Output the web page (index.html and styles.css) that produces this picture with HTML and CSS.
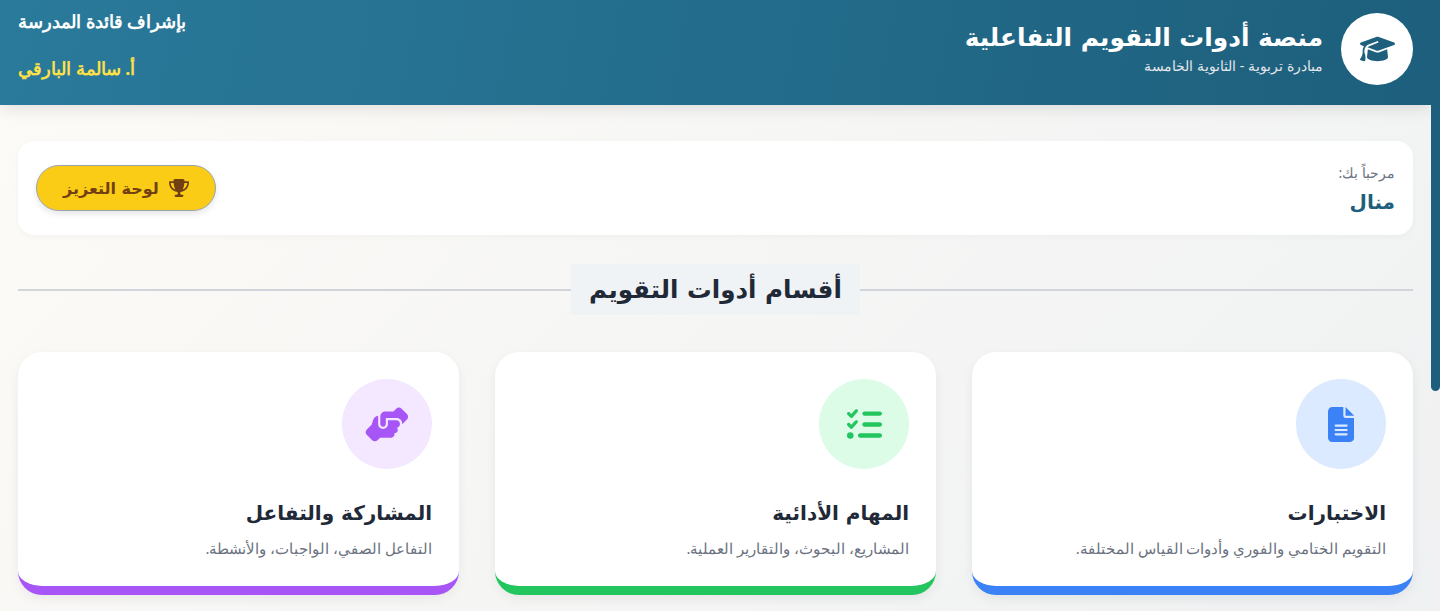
FILE: index.html
```html
<!DOCTYPE html>
<html lang="ar">
<head>
    <meta charset="UTF-8">
    <meta name="viewport" content="width=device-width, initial-scale=1.0">
    <title>منصة أدوات التقويم التفاعلية</title>
    <link rel="stylesheet" href="styles.css">
</head>
<body>
    <div class="page" dir="rtl">
        <header class="top-bar">
            <div class="brand">
                <div class="brand-logo">
                    <svg class="cap-icon" viewBox="0 0 640 512"><path d="M320 32c-8.1 0-16.1 1.4-23.7 4.1L15.8 137.4C6.3 140.9 0 149.9 0 160s6.3 19.1 15.8 22.6l57.9 20.9C57.3 229.3 48 259.8 48 291.9v28.1c0 28.4-10.8 57.7-22.3 80.8c-6.5 13-13.9 25.8-22.5 37.6C0 442.7-.9 448.3 .9 453.4s6 8.9 11.2 10.2l64 16c4.2 1.1 8.7 .3 12.4-2s6.3-6.1 7.1-10.4c8.6-42.8 4.3-81.2-2.1-108.7C90.3 344.3 86 329.8 80 316.5V291.9c0-30.2 10.2-58.7 27.9-81.5c12.9-15.5 29.6-28 49.2-35.7l157-61.7c8.2-3.2 17.5 .8 20.7 9s-.8 17.5-9 20.7l-157 61.7c-12.4 4.9-23.3 12.4-32.2 21.6l159.6 57.6c7.6 2.7 15.6 4.1 23.7 4.1s16.1-1.4 23.7-4.1L624.2 182.6c9.5-3.4 15.8-12.5 15.8-22.6s-6.3-19.1-15.8-22.6L343.7 36.1C336.1 33.4 328.1 32 320 32zM128 408c0 35.3 86 72 192 72s192-36.7 192-72L496.7 262.6 354.5 314c-11.1 4-22.8 6-34.5 6s-23.5-2-34.5-6L143.3 262.6 128 408z"/></svg>
                </div>
                <div>
                    <h1>منصة أدوات التقويم التفاعلية</h1>
                    <p>مبادرة تربوية - الثانوية الخامسة</p>
                </div>
            </div>
            <div class="supervisor">
                <p>بإشراف قائدة المدرسة</p>
                <p class="supervisor-name">أ. سالمة البارقي</p>
            </div>
        </header>

        <main class="content">
            <section class="welcome">
                <div class="welcome-text">
                    <p class="welcome-label">مرحباً بك:</p>
                    <p class="welcome-name">منال</p>
                </div>
                <a href="#" class="board-btn">
                    <svg class="trophy-icon" viewBox="0 0 576 512"><path d="M400 0H176c-26.5 0-48.1 21.8-47.1 48.2c.2 5.3 .4 10.6 .7 15.8H24C10.7 64 0 74.7 0 88c0 92.6 33.5 157 78.5 200.7c44.3 43.1 98.3 64.8 138.1 75.8c23.4 6.5 39.4 26 39.4 45.6c0 20.9-17 37.9-37.9 37.9H192c-17.7 0-32 14.3-32 32s14.3 32 32 32H384c17.7 0 32-14.3 32-32s-14.3-32-32-32H357.9C337 448 320 431 320 410.1c0-19.6 15.9-39.2 39.4-45.6c39.9-11 93.9-32.7 138.2-75.8C542.5 245 576 180.6 576 88c0-13.3-10.7-24-24-24H446.4c.3-5.2 .5-10.4 .7-15.8C448.1 21.8 426.5 0 400 0zM48.9 112h84.4c9.1 90.1 29.2 150.3 51.9 190.6c-24.9-11-50.8-26.5-73.2-48.3c-32-31.1-58-76-63-142.3zM464.1 254.3c-22.4 21.8-48.3 37.3-73.2 48.3c22.7-40.3 42.8-100.5 51.9-190.6h84.4c-5.1 66.3-31.1 111.2-63 142.3z"/></svg>
                    لوحة التعزيز
                </a>
            </section>

            <div class="section-title">
                <h2>أقسام أدوات التقويم</h2>
            </div>

            <section class="cards">
                <a href="#" class="card card-blue">
                    <div class="card-icon">
                        <svg class="file-icon" viewBox="0 0 384 512"><path d="M64 0C28.7 0 0 28.7 0 64V448c0 35.3 28.7 64 64 64H320c35.3 0 64-28.7 64-64V160H256c-17.7 0-32-14.3-32-32V0H64zM256 0V128H384L256 0zM112 256H272c8.8 0 16 7.2 16 16s-7.2 16-16 16H112c-8.8 0-16-7.2-16-16s7.2-16 16-16zm0 64H272c8.8 0 16 7.2 16 16s-7.2 16-16 16H112c-8.8 0-16-7.2-16-16s7.2-16 16-16zm0 64H272c8.8 0 16 7.2 16 16s-7.2 16-16 16H112c-8.8 0-16-7.2-16-16s7.2-16 16-16z"/></svg>
                    </div>
                    <h3>الاختبارات</h3>
                    <p>التقويم الختامي والفوري وأدوات القياس المختلفة.</p>
                </a>
                <a href="#" class="card card-green">
                    <div class="card-icon">
                        <svg class="list-icon" viewBox="0 0 512 512"><path d="M152.1 38.2c9.9 8.9 10.7 24 1.8 33.9l-72 80c-4.4 4.9-10.6 7.8-17.2 7.9s-12.9-2.4-17.6-7L7 113C-2.3 103.6-2.3 88.4 7 79s24.6-9.4 33.9 0l22.1 22.1 55.1-61.2c8.9-9.9 24-10.7 33.9-1.8zm0 160c9.9 8.9 10.7 24 1.8 33.9l-72 80c-4.4 4.9-10.6 7.8-17.2 7.9s-12.9-2.4-17.6-7L7 273c-9.4-9.4-9.4-24.6 0-33.9s24.6-9.4 33.9 0l22.1 22.1 55.1-61.2c8.9-9.9 24-10.7 33.9-1.8zM224 96c0-17.7 14.3-32 32-32H480c17.7 0 32 14.3 32 32s-14.3 32-32 32H256c-17.7 0-32-14.3-32-32zm0 160c0-17.7 14.3-32 32-32H480c17.7 0 32 14.3 32 32s-14.3 32-32 32H256c-17.7 0-32-14.3-32-32zM160 416c0-17.7 14.3-32 32-32H480c17.7 0 32 14.3 32 32s-14.3 32-32 32H192c-17.7 0-32-14.3-32-32zM48 368a48 48 0 1 1 0 96 48 48 0 1 1 0-96z"/></svg>
                    </div>
                    <h3>المهام الأدائية</h3>
                    <p>المشاريع، البحوث، والتقارير العملية.</p>
                </a>
                <a href="#" class="card card-purple">
                    <div class="card-icon">
                        <svg class="hands-icon" viewBox="0 0 640 512"><path d="M544 248v3.3l69.7-69.7c21.9-21.9 21.9-57.3 0-79.2L535.6 24.4c-21.9-21.9-57.3-21.9-79.2 0L416.3 64.5c-2.7-.3-5.5-.5-8.3-.5H296c-37.1 0-67.6 28-71.6 64H224V248c0 22.1 17.9 40 40 40s40-17.9 40-40V176c0 0 0-.1 0-.1V160l16 0 136 0c0 0 0 0 .1 0H464c44.2 0 80 35.8 80 80v8zM336 192v56c0 39.8-32.2 72-72 72s-72-32.2-72-72V129.4c-35.9 6.2-65.8 32.3-76 68.2L99.5 255.2 26.3 328.4c-21.9 21.9-21.9 57.3 0 79.2l78.1 78.1c21.9 21.9 57.3 21.9 79.2 0l37.7-37.7c.9 0 1.8 .1 2.7 .1H384c26.5 0 48-21.5 48-48c0-5.6-1-11-2.7-16H432c26.5 0 48-21.5 48-48c0-12.8-5-24.4-13.2-33c25.7-5.2 45.2-27.9 45.2-55c0-30.9-25.1-56-56-56H336z"/></svg>
                    </div>
                    <h3>المشاركة والتفاعل</h3>
                    <p>التفاعل الصفي، الواجبات، والأنشطة.</p>
                </a>
            </section>
        </main>
    </div>
    <div class="scroll-track"><div class="scroll-thumb"></div></div>
</body>
</html>
```

FILE: styles.css
```css
* {
    box-sizing: border-box;
}

body {
    font-family: "Noto Sans", "Open Sans", sans-serif;
    margin: 0;
    height: 100vh;
    overflow: hidden;
    display: flex;
    background: #f1f1f1;
    color: #1f2937;
}

h1, h2, h3, p {
    margin: 0;
}

.page {
    flex: 1;
    min-width: 0;
    background: linear-gradient(135deg, #fdfbf7, #eceff1) top / 100% 957px no-repeat;
}

.scroll-track {
    width: 9px;
    background: #f1f1f1;
}

.scroll-thumb {
    height: 391px;
    background: #1d5f7c;
    border-radius: 0 0 5px 5px;
}

.top-bar {
    display: flex;
    justify-content: space-between;
    align-items: flex-start;
    height: 105px;
    padding: 13px 18px 0;
    background: linear-gradient(100deg, #2a7a9b, #1d5f7c);
    box-shadow: 0 4px 15px rgba(0, 0, 0, 0.1);
    color: #fff;
}

.brand {
    display: flex;
    gap: 18px;
}

.brand-logo {
    width: 72px;
    height: 72px;
    border-radius: 50%;
    background: #fff;
    display: flex;
    align-items: center;
    justify-content: center;
}

.cap-icon {
    width: 35px;
    height: 28px;
    fill: #1d5f7c;
}

.brand h1 {
    padding-top: 7px;
    font-family: "DejaVu Sans", sans-serif;
    font-size: 24.8px;
    font-weight: 700;
    line-height: 36px;
}

.brand p {
    font-size: 14.4px;
    line-height: 20px;
    color: #e5e7eb;
}

.supervisor {
    margin-top: -5px;
    text-align: left;
    font-size: 18.2px;
    font-weight: 700;
}

.supervisor p {
    line-height: 26px;
    margin-bottom: 21px;
}

.supervisor .supervisor-name {
    color: #fde047;
    font-size: 18px;
}

.content {
    padding: 36px 18px 0;
}

.welcome {
    display: flex;
    justify-content: space-between;
    align-items: center;
    height: 94px;
    padding: 0 18px;
    background: #fff;
    border-radius: 16px;
    box-shadow: 0 2px 6px rgba(0, 0, 0, 0.03);
}

.welcome-text {
    display: flex;
    flex-direction: column;
    gap: 8px;
}

.welcome-label {
    font-size: 14px;
    color: #6b7280;
}

.welcome-name {
    font-family: "DejaVu Sans", sans-serif;
    font-size: 20px;
    font-weight: 700;
    color: #1d5f7c;
}

.board-btn {
    display: flex;
    align-items: center;
    gap: 10px;
    height: 46px;
    padding: 0 26px;
    background: #facc15;
    border: 1px solid #9ca3af;
    border-radius: 23px;
    box-shadow: 0 3px 6px rgba(0, 0, 0, 0.1);
    color: #713f12;
    font-family: "DejaVu Sans", sans-serif;
    font-size: 16px;
    font-weight: 700;
    text-decoration: none;
}

.trophy-icon {
    width: 20px;
    height: 18px;
    fill: #713f12;
}

.section-title {
    display: flex;
    justify-content: center;
    align-items: center;
    margin-top: 29px;
    background: linear-gradient(#d1d5db, #d1d5db) center / 100% 2px no-repeat;
}

.section-title h2 {
    height: 51px;
    padding: 0 18px;
    background: #eff3f5;
    font-family: "DejaVu Sans", sans-serif;
    font-size: 24.6px;
    font-weight: 700;
    line-height: 51px;
}

.cards {
    display: grid;
    grid-template-columns: repeat(3, 1fr);
    gap: 36px;
    margin-top: 37px;
}

.card {
    display: block;
    height: 243px;
    padding: 27px 27px 0;
    background: #fff;
    border-radius: 24px;
    border-bottom: 9px solid;
    box-shadow: 0 4px 12px rgba(0, 0, 0, 0.06);
    text-decoration: none;
}

.card-blue {
    border-color: #3b82f6;
}

.card-green {
    border-color: #22c55e;
}

.card-purple {
    border-color: #a855f7;
}

.card-icon {
    width: 90px;
    height: 90px;
    border-radius: 50%;
    display: flex;
    align-items: center;
    justify-content: center;
}

.card-blue .card-icon {
    background: #dbeafe;
}

.card-green .card-icon {
    background: #dcfce7;
}

.card-purple .card-icon {
    background: #f3e8ff;
}

.card-icon svg {
    height: 35px;
}

.file-icon {
    fill: #3b82f6;
}

.list-icon {
    fill: #22c55e;
}

.hands-icon {
    fill: #a855f7;
}

.card h3 {
    margin-top: 32px;
    font-family: "DejaVu Sans", sans-serif;
    font-size: 20px;
    font-weight: 700;
    color: #1f2937;
}

.card p {
    margin-top: 13px;
    font-size: 14.8px;
    color: #6b7280;
}
```
